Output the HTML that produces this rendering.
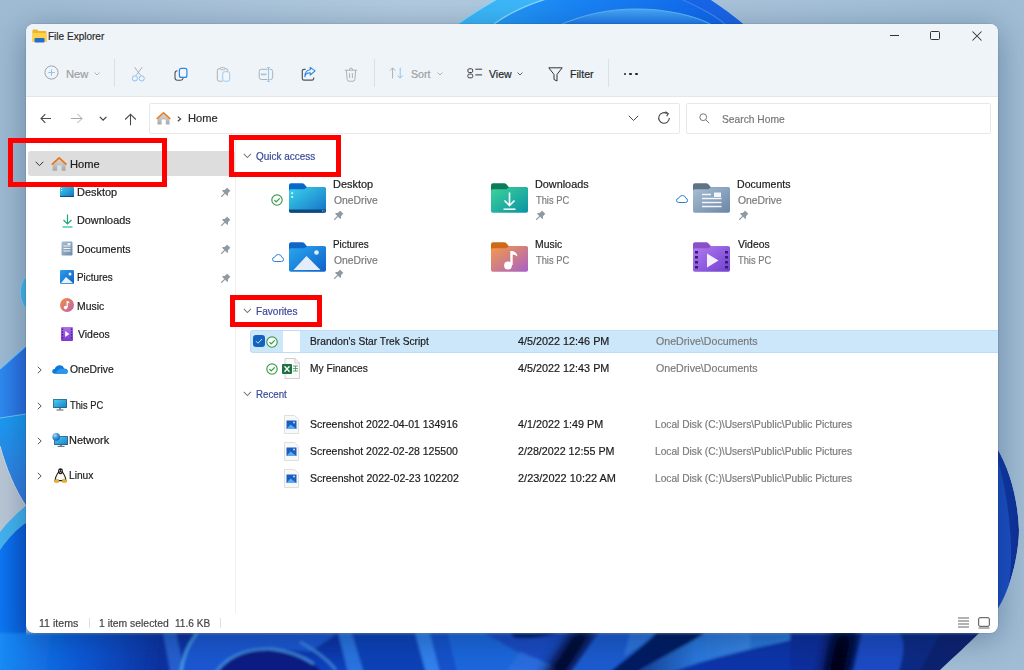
<!DOCTYPE html>
<html><head><meta charset="utf-8"><title>File Explorer</title>
<style>
html,body{margin:0;padding:0;width:1024px;height:670px;overflow:hidden;background:#a8bfd3}
body{position:relative;font-family:"Liberation Sans", sans-serif}
.t{position:absolute;white-space:nowrap;font-family:"Liberation Sans", sans-serif;transform-origin:0 0;-webkit-text-stroke:0.2px currentColor}
svg{overflow:visible}
</style></head><body>

<svg style="position:absolute;left:0;top:0" width="1024" height="670" viewBox="0 0 1024 670">
<defs>
<linearGradient id="bg" x1="0" y1="0" x2="1024" y2="0" gradientUnits="userSpaceOnUse">
<stop offset="0" stop-color="#9fbbd3"/><stop offset="0.4" stop-color="#b2cbdf"/><stop offset="1" stop-color="#a0bdd5"/>
</linearGradient>
<linearGradient id="dome" x1="458" y1="0" x2="742" y2="0" gradientUnits="userSpaceOnUse">
<stop offset="0" stop-color="#2aa4fa"/><stop offset="0.4" stop-color="#1a86f6"/><stop offset="1" stop-color="#0f62ea"/>
</linearGradient>
<linearGradient id="domec" x1="0" y1="9" x2="0" y2="24" gradientUnits="userSpaceOnUse"><stop offset="0" stop-color="#4aaaf8"/><stop offset="1" stop-color="#1f7cee"/></linearGradient>
<linearGradient id="b1" x1="0" y1="640" x2="160" y2="660" gradientUnits="userSpaceOnUse">
<stop offset="0" stop-color="#1a8cf6"/><stop offset="0.5" stop-color="#0c5ad8"/><stop offset="1" stop-color="#0a32a0"/>
</linearGradient>
<linearGradient id="b2" x1="0" y1="633" x2="0" y2="670" gradientUnits="userSpaceOnUse">
<stop offset="0" stop-color="#0b2d9a"/><stop offset="1" stop-color="#0e44c0"/>
</linearGradient>
<linearGradient id="shadowd" x1="550" y1="0" x2="640" y2="0" gradientUnits="userSpaceOnUse">
<stop offset="0" stop-color="#0a2a90" stop-opacity="0"/><stop offset="0.5" stop-color="#02051c"/><stop offset="1" stop-color="#0a2070" stop-opacity="0.2"/>
</linearGradient>
<linearGradient id="band" x1="600" y1="0" x2="760" y2="0" gradientUnits="userSpaceOnUse">
<stop offset="0" stop-color="#061a60"/><stop offset="0.6" stop-color="#2a78dc"/><stop offset="1" stop-color="#3a88e6"/>
</linearGradient>
<linearGradient id="sh2" x1="820" y1="0" x2="900" y2="0" gradientUnits="userSpaceOnUse">
<stop offset="0" stop-color="#0a2a90" stop-opacity="0"/><stop offset="0.55" stop-color="#020820"/><stop offset="1" stop-color="#0a2a90" stop-opacity="0"/>
</linearGradient>
<linearGradient id="rpet" x1="997" y1="0" x2="1020" y2="0" gradientUnits="userSpaceOnUse">
<stop offset="0" stop-color="#123ca8"/><stop offset="1" stop-color="#0e3096"/>
</linearGradient>
<linearGradient id="lblue" x1="0" y1="0" x2="26" y2="0" gradientUnits="userSpaceOnUse">
<stop offset="0" stop-color="#2e8cf2"/><stop offset="1" stop-color="#2a6ee0"/>
</linearGradient>
<linearGradient id="lmid" x1="0" y1="420" x2="0" y2="505" gradientUnits="userSpaceOnUse"><stop offset="0" stop-color="#1c9af2"/><stop offset="1" stop-color="#3a78dc"/></linearGradient>
<linearGradient id="lbot" x1="0" y1="0" x2="26" y2="0" gradientUnits="userSpaceOnUse">
<stop offset="0" stop-color="#0c78f4"/><stop offset="1" stop-color="#0a5cd8"/>
</linearGradient>
<filter id="soft" x="-5%" y="-50%" width="110%" height="200%"><feGaussianBlur stdDeviation="1.6"/></filter><filter id="soft5" x="-100%" y="-50%" width="300%" height="200%"><feGaussianBlur stdDeviation="6"/></filter>
</defs>
<rect width="1024" height="670" fill="url(#bg)"/>
<!-- top dome -->
<path d="M458 24 C 470 15, 485 6, 497 -1 L 709 -1 C 720 6, 732 15, 743 24 Z" fill="url(#dome)"/>
<path d="M458 24 C 470 15, 485 6, 497 -1 L 546 -1 C 524 6, 506 15, 494 24 Z" fill="#3cb8fa"/>
<path d="M458 24 C 470 15, 485 6, 497 -1" stroke="#8adcfc" stroke-width="1.2" fill="none"/>
<path d="M494 24 C 506 15, 524 6, 546 -1" stroke="#86d6fa" stroke-width="1.4" fill="none"/>
<path d="M681 -1 L709 -1 C 720 6, 732 15, 743 24 L726 25 C 715 15, 700 8, 681 -1 Z" fill="#1a66e8"/>
<path d="M560 25 C 585 14, 610 9, 636 9 C 665 9, 694 15, 712 25 Z" fill="url(#domec)"/>
<path d="M560 25 C 585 14, 610 9, 636 9 C 665 9, 694 15, 712 25" stroke="#60b6f8" stroke-width="1.2" fill="none"/>
<path d="M681 -1 C 700 8, 715 15, 726 25" stroke="#3c86f2" stroke-width="1.2" fill="none"/>
<!-- left strip -->
<path d="M26 277 C 19 283, 18 301, 26 308 Z" fill="#4cb8ee"/>
<path d="M26 277 C 19 283, 18 301, 26 308" stroke="#7fd6f6" stroke-width="1" fill="none"/>
<path d="M0 369 L26 346 L26 415 L0 418 Z" fill="url(#lblue)"/>
<path d="M0 369 L26 346" stroke="#70c8f6" stroke-width="1.2"/>
<path d="M0 418 L26 414 L26 510 L0 510 Z" fill="url(#lmid)"/>
<path d="M0 418 L26 414" stroke="#6cc4f4" stroke-width="1.2"/>
<path d="M0 446 C 6 468, 15 490, 26 506 L 0 532 Z" fill="#bac8d6"/>
<path d="M0 446 C 6 468, 15 490, 26 506" stroke="#d0dce6" stroke-width="1" fill="none"/>
<path d="M26 506 C 18 512, 8 522, 0 532 L0 550 C 8 538, 18 528, 26 523 Z" fill="#44b4f0"/>
<path d="M0 550 C 8 538, 18 528, 26 523 L26 670 L0 670 Z" fill="url(#lbot)"/>
<!-- bottom strip -->
<g filter="url(#soft)">
<rect x="-10" y="633" width="1044" height="47" fill="url(#b2)"/>
<path d="M-10 633 L163 633 L172 680 L-10 680 Z" fill="url(#b1)"/>
<path d="M163 633 L176 633 L186 680 L172 680 Z" fill="#2660d0"/>
<path d="M197 633 C 188 645, 182 657, 180 680 L 240 680 C 250 652, 275 647, 310 652 L 338 633 Z" fill="#1a58d2"/>
<path d="M197 633 C 188 645, 182 657, 180 680" stroke="#50b0f2" stroke-width="2" fill="none"/>
<path d="M212 680 C 222 656, 248 648, 272 649 C 290 651, 302 656, 314 664 L 330 680 Z" fill="#0a1c84"/>
<path d="M212 680 C 222 656, 248 648, 272 649 C 290 651, 302 656, 314 664" stroke="#4a9cf0" stroke-width="1.8" fill="none"/>
<path d="M300 642 C 315 650, 328 660, 336 670" stroke="#4a9cee" stroke-width="1.5" fill="none"/>
<path d="M338 633 L352 633 L366 680 L350 680 Z" fill="#2c74e2"/>
<path d="M352 633 L415 633 L428 680 L366 680 Z" fill="#0e42b8"/>
<path d="M415 633 L430 633 L442 680 L428 680 Z" fill="#3282ee"/>
<path d="M430 633 L447 633 L459 680 L442 680 Z" fill="#1852cc"/>
<path d="M447 633 L485 633 C 510 648, 535 660, 560 680 L 459 680 Z" fill="#1a68de"/>
<path d="M485 633 L 700 633 L 700 680 L560 680 C 535 660, 510 648, 485 633 Z" fill="#1a4cc4"/>
<path d="M510 633 L 560 633 C 545 637, 530 639, 515 638 Z" fill="#061a70"/>
<path d="M520 652 C 540 660, 555 665, 575 680 L 500 680 Z" fill="#2a6ee0"/>
<path d="M574 630 L596 630 L563 680 L541 680 Z" fill="#02041a" filter="url(#soft5)"/>
<path d="M599 633 L656 633 C 640 650, 620 662, 601 680 L 566 680 Z" fill="#1e5cd0"/>
<path d="M630 633 L656 633 C 645 643, 635 650, 624 656 Z" fill="#2e74dc"/>
<path d="M656 633 L 705 633 C 680 650, 650 662, 625 680 L 601 680 C 620 662, 640 650, 656 633 Z" fill="#061a62"/>
<path d="M705 633 L 790 633 L 790 640 C 740 652, 690 662, 655 680 L 625 680 C 650 662, 680 650, 705 633 Z" fill="url(#band)"/>
<path d="M560 680 L 655 680 C 690 662, 740 652, 790 640 L 790 680 Z" fill="#0b34aa"/>
<path d="M750 633 L 800 633 C 785 640, 765 645, 750 649 Z" fill="#2a78d8"/>
<path d="M790 633 L 860 633 L 850 680 L 790 680 Z" fill="#0b2e9c"/>
<path d="M832 630 L 858 630 L 848 680 L 822 680 Z" fill="#020618" filter="url(#soft5)"/>
<path d="M862 633 L 900 633 C 906 645, 904 660, 895 680 L 852 680 Z" fill="#1a4cc4"/>
<path d="M900 633 C 906 645, 904 660, 895 680 L 960 680 L 1010 633 Z" fill="#0b2a84"/><path d="M940 633 C 935 645, 925 660, 915 680 L 950 680 C 960 660, 975 645, 990 633 Z" fill="#0a2270"/>
</g>

<!-- right petal -->
<path d="M997 448 C 1010 470, 1018 500, 1019 530 C 1019 545, 1015 570, 1007 590 C 1001 606, 990 622, 979 633 L 997 633 Z" fill="url(#rpet)"/>
<path d="M997 458 C 1006 486, 1012 530, 1011 560 C 1010 590, 1004 612, 997 624 Z" fill="#1c4fc4"/>
<path d="M1040 430 L1040 690 L 925 690 L 940 670 C 955 656, 968 644, 979 633 C 990 622, 1001 606, 1007 590 C 1015 570, 1019 545, 1019 530 C 1018 500, 1010 470, 997 448 L 997 430 Z" fill="url(#bg)"/>
</svg><div id="win" style="position:absolute;left:26px;top:24px;width:971.5px;height:609px;border-radius:8px;overflow:hidden;background:#ffffff;box-shadow:0 0 0 1px rgba(0,0,0,0.06),0 6px 34px rgba(0,30,70,0.36)"></div><div style="position:absolute;left:26px;top:24px;width:971.5px;height:72px;border-radius:8px 8px 0 0;background:#eff4f9"></div><div style="position:absolute;left:26px;top:96px;width:971.5px;height:1px;background:#e3e6ea"></div><svg style="position:absolute;left:32px;top:29px;" width="15" height="14" viewBox="0 0 15 14"><path d="M0.5 1.5 Q0.5 0.5 1.5 0.5 L5 0.5 L6.5 2 L13.5 2 Q14.5 2 14.5 3 L14.5 13 L0.5 13 Z" fill="#f0b429"/><path d="M0.5 4 L14.5 4 L14.5 13 L0.5 13 Z" fill="#ffd04a"/><rect x="2.5" y="9" width="10" height="4.5" rx="1" fill="#1f6fd0"/></svg><div class="t" style="left:47.69px;top:30.69px;font-size:11px;line-height:11px;color:#2a2a2a;transform:scaleX(0.9115);">File Explorer</div><div style="position:absolute;left:890px;top:35px;width:9px;height:1px;background:#333"></div><div style="position:absolute;left:930px;top:31px;width:10px;height:9px;border:1px solid #333;border-radius:1.5px;box-sizing:border-box"></div><svg style="position:absolute;left:972px;top:31px;" width="10" height="10" viewBox="0 0 10 10"><path d="M0.5 0.5 L9.5 9.5 M9.5 0.5 L0.5 9.5" stroke="#333" stroke-width="1.05"/></svg><svg style="position:absolute;left:44px;top:65.3px;" width="15" height="15" viewBox="0 0 15 15"><circle cx="7.5" cy="7.5" r="6.6" fill="none" stroke="#a3a3a3" stroke-width="1"/><path d="M7.5 4.2 V10.8 M4.2 7.5 H10.8" stroke="#8ec4f0" stroke-width="1"/></svg><div class="t" style="left:65.58px;top:69.09px;font-size:11px;line-height:11px;color:#a0a0a0;transform:scaleX(1.0190);">New</div><svg style="position:absolute;left:93.5px;top:71.8px;" width="6" height="4" viewBox="0 0 6 4"><path d="M0.5 0.5 L3 3 L5.5 0.5" fill="none" stroke="#a8a8a8" stroke-width="0.9"/></svg><div style="position:absolute;left:114px;top:59px;width:1px;height:28px;background:#dcdfe3"></div><svg style="position:absolute;left:131px;top:65.8px;" width="15" height="16" viewBox="0 0 15 16"><path d="M3.6 1.2 L9.8 9.6 M11.2 1.2 L5 9.6" stroke="#a8a8a8" stroke-width="0.9" fill="none"/><circle cx="3.9" cy="12.4" r="2.6" fill="none" stroke="#8ec0f0" stroke-width="1"/><circle cx="10.7" cy="12.4" r="2.6" fill="none" stroke="#8ec0f0" stroke-width="1"/></svg><svg style="position:absolute;left:174px;top:66.8px;" width="15" height="15" viewBox="0 0 15 15"><path d="M3.5 3.8 Q1 3.8 1 6.3 L1 10.8 Q1 13.2 3.4 13.2 L6.8 13.2 Q8.8 13.2 9.2 11.2" fill="none" stroke="#505050" stroke-width="1.1"/><rect x="5.4" y="1.3" width="7.5" height="9.1" rx="2" fill="#f2f5f9" stroke="#2a86e4" stroke-width="1.2"/></svg><svg style="position:absolute;left:216px;top:66.8px;" width="15" height="15" viewBox="0 0 15 15"><path d="M4.2 1.6 L3.2 1.6 Q1.3 1.6 1.3 3.5 L1.3 12.3 Q1.3 14.2 3.2 14.2 L6.4 14.2 M8.8 1.6 L9.8 1.6 Q11.7 1.6 11.7 3.5 L11.7 4.4" fill="none" stroke="#b0b0b0" stroke-width="1"/><rect x="4.2" y="0.5" width="4.6" height="2.2" rx="1.1" fill="none" stroke="#b0b0b0" stroke-width="0.9"/><rect x="6.7" y="4.7" width="7" height="9.5" rx="2" fill="#f2f5f9" stroke="#9ccaf2" stroke-width="1"/></svg><svg style="position:absolute;left:258px;top:66.8px;" width="16" height="15" viewBox="0 0 16 15"><path d="M9.6 2.3 L3.4 2.3 Q1.2 2.3 1.2 4.5 L1.2 10.3 Q1.2 12.5 3.4 12.5 L9.6 12.5 M11.4 2.3 L12.5 2.3 Q14.7 2.3 14.7 4.5 L14.7 10.3 Q14.7 12.5 12.5 12.5 L11.4 12.5" fill="none" stroke="#b0b0b0" stroke-width="1"/><path d="M10.5 0.5 V14.3 M9.1 0.5 H11.9 M9.1 14.3 H11.9" stroke="#94c4f0" stroke-width="1" fill="none"/><rect x="2.8" y="6.6" width="5.6" height="1.6" fill="#94c4f0"/></svg><svg style="position:absolute;left:301px;top:66.8px;" width="15" height="15" viewBox="0 0 15 15"><path d="M4.6 2.3 L3 2.3 Q1.3 2.3 1.3 4 L1.3 11.4 Q1.3 13.1 3 13.1 L11 13.1 Q12.7 13.1 12.7 11.4 L12.7 10.4" fill="none" stroke="#555" stroke-width="1.2"/><path d="M3.9 9.6 Q4.2 5.9 9.2 5.7 L9.2 8 L14.1 3.9 L9.2 0.4 L9.2 2.7 Q3.9 3.3 3.9 9.6 Z" fill="#f2f5f9" stroke="#2a86e4" stroke-width="1.1" stroke-linejoin="round"/></svg><svg style="position:absolute;left:344px;top:66.8px;" width="14" height="15" viewBox="0 0 14 15"><path d="M0.8 3.2 H13.2 M5.4 3.2 Q5.4 1 7 1 Q8.6 1 8.6 3.2 M2.3 3.2 L3.2 12.6 Q3.4 14.2 5 14.2 L9 14.2 Q10.6 14.2 10.8 12.6 L11.7 3.2 M5.6 6.2 V11 M8.4 6.2 V11" fill="none" stroke="#b0b0b0" stroke-width="1"/></svg><div style="position:absolute;left:374px;top:59px;width:1px;height:28px;background:#dcdfe3"></div><svg style="position:absolute;left:389px;top:67.3px;" width="16" height="12" viewBox="0 0 16 12"><path d="M3.6 11.4 V0.9 M0.9 3.6 L3.6 0.9 L6.3 3.6" fill="none" stroke="#b0b0b0" stroke-width="1"/><path d="M11.2 0.6 V11.1 M8.5 8.4 L11.2 11.1 L13.9 8.4" fill="none" stroke="#8ec4f0" stroke-width="1"/></svg><div class="t" style="left:410.60px;top:69.09px;font-size:11px;line-height:11px;color:#a0a0a0;transform:scaleX(0.9700);">Sort</div><svg style="position:absolute;left:436.5px;top:71.8px;" width="6" height="4" viewBox="0 0 6 4"><path d="M0.5 0.5 L3 3 L5.5 0.5" fill="none" stroke="#a8a8a8" stroke-width="0.9"/></svg><svg style="position:absolute;left:467px;top:68.2px;" width="16" height="11.5" viewBox="0 0 16 11.5"><rect x="0.9" y="0.8" width="4.8" height="3.7" rx="1.3" fill="none" stroke="#3a3a3a" stroke-width="1"/><rect x="0.9" y="6.1" width="4.8" height="3.7" rx="1.3" fill="none" stroke="#3a3a3a" stroke-width="1"/><path d="M8.3 1.2 H15.1 M8.3 6.9 H15.1" stroke="#3a3a3a" stroke-width="1"/></svg><div class="t" style="left:488.80px;top:69.09px;font-size:11px;line-height:11px;color:#262626;transform:scaleX(0.9583);">View</div><svg style="position:absolute;left:516.5px;top:71.8px;" width="6" height="4" viewBox="0 0 6 4"><path d="M0.5 0.5 L3 3 L5.5 0.5" fill="none" stroke="#555" stroke-width="0.9"/></svg><svg style="position:absolute;left:548px;top:66.8px;" width="15" height="15" viewBox="0 0 15 15"><path d="M0.8 0.8 H14.2 L9 7.5 V14 L6 12.5 V7.5 Z" fill="none" stroke="#333" stroke-width="1" stroke-linejoin="round"/></svg><div class="t" style="left:569.63px;top:69.09px;font-size:11px;line-height:11px;color:#262626;transform:scaleX(0.9667);">Filter</div><div style="position:absolute;left:608px;top:59px;width:1px;height:28px;background:#dcdfe3"></div><div style="position:absolute;left:623.7px;top:72.5px;width:2.6px;height:2.6px;border-radius:50%;background:#222"></div><div style="position:absolute;left:629.4000000000001px;top:72.5px;width:2.6px;height:2.6px;border-radius:50%;background:#222"></div><div style="position:absolute;left:635.1px;top:72.5px;width:2.6px;height:2.6px;border-radius:50%;background:#222"></div><svg style="position:absolute;left:39.5px;top:113px;" width="12" height="11" viewBox="0 0 12 11"><path d="M11 5.5 H1 M5.3 1.2 L1 5.5 L5.3 9.8" fill="none" stroke="#4a4a4a" stroke-width="1.1"/></svg><svg style="position:absolute;left:70px;top:113px;" width="13" height="11" viewBox="0 0 13 11"><path d="M1 5.5 H12 M7.5 1 L12 5.5 L7.5 10" fill="none" stroke="#a8a8a8" stroke-width="1"/></svg><svg style="position:absolute;left:99px;top:115.8px;" width="9" height="6" viewBox="0 0 9 6"><path d="M0.8 0.9 L4.1 4.2 L7.4 0.9" fill="none" stroke="#444" stroke-width="1.3"/></svg><svg style="position:absolute;left:124px;top:112.5px;" width="13" height="13" viewBox="0 0 13 13"><path d="M6.5 12.3 V1.2 M1.2 6.5 L6.5 1.2 L11.8 6.5" fill="none" stroke="#4a4a4a" stroke-width="1.1"/></svg><div style="position:absolute;left:149px;top:103px;width:531px;height:31px;border:1px solid #e8e8e8;box-sizing:border-box;background:#fff;border-radius:2px"></div><svg style="position:absolute;left:156px;top:111.1px;" width="14.72" height="13.8" viewBox="0 0 16 15"><defs><linearGradient id="hg" x1="0" y1="0" x2="0" y2="1"><stop offset="0" stop-color="#dadada"/><stop offset="1" stop-color="#a8a8a8"/></linearGradient></defs><path d="M1.6 8.6 L8.15 2.6 L14.7 8.6 L14.7 14.7 L10.6 14.7 L10.6 9.3 L6.1 9.3 L6.1 14.7 L1.6 14.7 Z" fill="url(#hg)"/><path d="M1.3 8.2 L8.15 1.9 L15 8.2" fill="none" stroke="#ec7412" stroke-width="1.7" stroke-linejoin="round" stroke-linecap="round"/></svg><svg style="position:absolute;left:176.8px;top:116.3px;" width="5" height="6" viewBox="0 0 5 6"><path d="M0.8 0.6 L3.6 2.9 L0.8 5.2" fill="none" stroke="#444" stroke-width="1.2"/></svg><div class="t" style="left:187.79px;top:112.79px;font-size:11px;line-height:11px;color:#2b2b2b;transform:scaleX(1.0107);">Home</div><svg style="position:absolute;left:627.5px;top:115px;" width="11" height="7" viewBox="0 0 11 7"><path d="M0.8 0.8 L5.5 5.5 L10.2 0.8" fill="none" stroke="#444" stroke-width="1"/></svg><svg style="position:absolute;left:657px;top:111px;" width="14" height="14" viewBox="0 0 14 14"><path d="M12.3 7 A5.3 5.3 0 1 1 9.8 2.5" fill="none" stroke="#444" stroke-width="1.1"/><path d="M8.3 0.8 L11.3 2.6 L9.6 5.3" fill="none" stroke="#444" stroke-width="1.1"/></svg><div style="position:absolute;left:686px;top:103px;width:305px;height:31px;border:1px solid #e8e8e8;box-sizing:border-box;background:#fff;border-radius:2px"></div><svg style="position:absolute;left:699.2px;top:112.7px;" width="11" height="11" viewBox="0 0 11 11"><circle cx="4.2" cy="4.2" r="3.4" fill="none" stroke="#777" stroke-width="1"/><path d="M6.7 6.7 L10.2 10.2" stroke="#777" stroke-width="1"/></svg><div class="t" style="left:722.30px;top:113.79px;font-size:11px;line-height:11px;color:#777777;transform:scaleX(0.9328);">Search Home</div><div style="position:absolute;left:235px;top:141px;width:1px;height:472px;background:#efefef"></div><div style="position:absolute;left:28px;top:151px;width:207px;height:25px;background:#dddddd;border-radius:3px"></div><svg style="position:absolute;left:35px;top:161px;" width="9" height="6" viewBox="0 0 9 6"><path d="M0.7 0.8 L4.5 4.6 L8.3 0.8" fill="none" stroke="#333" stroke-width="1"/></svg><svg style="position:absolute;left:51.1px;top:156px;" width="16.0" height="15.0" viewBox="0 0 16 15"><defs><linearGradient id="hg" x1="0" y1="0" x2="0" y2="1"><stop offset="0" stop-color="#dadada"/><stop offset="1" stop-color="#a8a8a8"/></linearGradient></defs><path d="M1.6 8.6 L8.15 2.6 L14.7 8.6 L14.7 14.7 L10.6 14.7 L10.6 9.3 L6.1 9.3 L6.1 14.7 L1.6 14.7 Z" fill="url(#hg)"/><path d="M1.3 8.2 L8.15 1.9 L15 8.2" fill="none" stroke="#ec7412" stroke-width="1.7" stroke-linejoin="round" stroke-linecap="round"/></svg><div class="t" style="left:69.79px;top:158.99px;font-size:11px;line-height:11px;color:#1b1b1b;transform:scaleX(1.0107);">Home</div><svg style="position:absolute;left:60px;top:186.8px;" width="14" height="10" viewBox="0 0 14 10"><defs><linearGradient id="dk60186" x1="0" y1="0" x2="1" y2="1"><stop offset="0" stop-color="#36cce8"/><stop offset="1" stop-color="#1474c4"/></linearGradient></defs><rect x="0" y="0" width="14" height="10" rx="1" fill="url(#dk60186)"/><rect x="0" y="8.9" width="14" height="1.1" fill="#0d4f8a"/><rect x="1.2" y="1" width="1" height="1" fill="#e8f8ff"/><rect x="1.2" y="3" width="1" height="1" fill="#e8f8ff"/></svg><svg style="position:absolute;left:61.5px;top:214px;" width="11" height="14" viewBox="0 0 11 14"><path d="M5.5 0.5 V10 M1.5 6 L5.5 10 L9.5 6" fill="none" stroke="#1fa67a" stroke-width="1.2"/><path d="M0.5 13 H10.5" stroke="#3cc8a8" stroke-width="1.4"/></svg><svg style="position:absolute;left:60.8px;top:241px;" width="12" height="15" viewBox="0 0 12 15"><defs><linearGradient id="docg" x1="0" y1="0" x2="1" y2="1"><stop offset="0" stop-color="#a9bfd6"/><stop offset="1" stop-color="#6f8aa8"/></linearGradient></defs><rect x="0.5" y="0.5" width="11" height="14" rx="1.2" fill="url(#docg)"/><path d="M2.5 5 H9.5 M2.5 7.5 H9.5 M2.5 10 H9.5" stroke="#eef3f8" stroke-width="1"/><rect x="6.5" y="2" width="3" height="2" fill="#eef3f8"/></svg><svg style="position:absolute;left:60px;top:270.2px;" width="14" height="14" viewBox="0 0 14 14"><defs><linearGradient id="picg" x1="0" y1="0" x2="1" y2="1"><stop offset="0" stop-color="#2aa0f0"/><stop offset="1" stop-color="#0f5fc0"/></linearGradient></defs><rect x="0" y="0" width="14" height="14" rx="1.2" fill="url(#picg)"/><path d="M0.8 13.2 L6 7 L13.2 13.2 Z" fill="#e8f2fc"/><circle cx="10" cy="4" r="1.5" fill="#e8f2fc"/></svg><svg style="position:absolute;left:59.7px;top:298.4px;" width="14" height="14" viewBox="0 0 14 14"><defs><linearGradient id="musg" x1="0" y1="0" x2="1" y2="1"><stop offset="0" stop-color="#f09040"/><stop offset="1" stop-color="#c060b0"/></linearGradient></defs><circle cx="7" cy="7" r="7" fill="url(#musg)"/><path d="M7.2 3 V9.3" stroke="#fff" stroke-width="1.3"/><circle cx="5.6" cy="9.6" r="1.8" fill="#fff"/><path d="M7.2 3 Q9.5 3.3 9.8 5.5 Q8.5 4.6 7.2 4.8 Z" fill="#fff"/></svg><svg style="position:absolute;left:60.8px;top:327px;" width="12" height="14" viewBox="0 0 12 14"><defs><linearGradient id="vidg" x1="0" y1="0" x2="0" y2="1"><stop offset="0" stop-color="#b070e8"/><stop offset="1" stop-color="#7a3ad0"/></linearGradient></defs><rect x="0" y="0" width="12" height="14" rx="1" fill="url(#vidg)"/><path d="M1.5 1.5 V12.5 M10.5 1.5 V12.5" stroke="#4a2090" stroke-width="1.4" stroke-dasharray="1.4 1.4"/><path d="M4.2 4 L8.3 7 L4.2 10 Z" fill="#fff"/></svg><div class="t" style="left:76.61px;top:187.09px;font-size:11px;line-height:11px;color:#1b1b1b;transform:scaleX(0.9949);">Desktop</div><div class="t" style="left:76.62px;top:215.49px;font-size:11px;line-height:11px;color:#1b1b1b;transform:scaleX(0.9849);">Downloads</div><div class="t" style="left:76.64px;top:243.99px;font-size:11px;line-height:11px;color:#1b1b1b;transform:scaleX(0.9618);">Documents</div><div class="t" style="left:76.70px;top:272.29px;font-size:11px;line-height:11px;color:#1b1b1b;transform:scaleX(0.8974);">Pictures</div><div class="t" style="left:76.65px;top:300.79px;font-size:11px;line-height:11px;color:#1b1b1b;transform:scaleX(0.9464);">Music</div><div class="t" style="left:77.60px;top:328.89px;font-size:11px;line-height:11px;color:#1b1b1b;transform:scaleX(0.9485);">Videos</div><svg style="position:absolute;left:221px;top:187.4px;" width="10" height="10" viewBox="0 0 10 10"><path d="M5.9 0.5 L9.5 4.1 L8.4 4.6 L6.9 6.5 L7.1 8.1 L6.3 8.9 L1.1 3.7 L1.9 2.9 L3.5 3.1 L5.4 1.6 Z" fill="#8e99a2"/><path d="M3.4 6.6 L0.6 9.4" stroke="#8e99a2" stroke-width="1.3" stroke-linecap="round"/></svg><svg style="position:absolute;left:221px;top:215.8px;" width="10" height="10" viewBox="0 0 10 10"><path d="M5.9 0.5 L9.5 4.1 L8.4 4.6 L6.9 6.5 L7.1 8.1 L6.3 8.9 L1.1 3.7 L1.9 2.9 L3.5 3.1 L5.4 1.6 Z" fill="#8e99a2"/><path d="M3.4 6.6 L0.6 9.4" stroke="#8e99a2" stroke-width="1.3" stroke-linecap="round"/></svg><svg style="position:absolute;left:221px;top:244.3px;" width="10" height="10" viewBox="0 0 10 10"><path d="M5.9 0.5 L9.5 4.1 L8.4 4.6 L6.9 6.5 L7.1 8.1 L6.3 8.9 L1.1 3.7 L1.9 2.9 L3.5 3.1 L5.4 1.6 Z" fill="#8e99a2"/><path d="M3.4 6.6 L0.6 9.4" stroke="#8e99a2" stroke-width="1.3" stroke-linecap="round"/></svg><svg style="position:absolute;left:221px;top:272.6px;" width="10" height="10" viewBox="0 0 10 10"><path d="M5.9 0.5 L9.5 4.1 L8.4 4.6 L6.9 6.5 L7.1 8.1 L6.3 8.9 L1.1 3.7 L1.9 2.9 L3.5 3.1 L5.4 1.6 Z" fill="#8e99a2"/><path d="M3.4 6.6 L0.6 9.4" stroke="#8e99a2" stroke-width="1.3" stroke-linecap="round"/></svg><svg style="position:absolute;left:36.5px;top:366.40000000000003px;" width="6" height="8" viewBox="0 0 6 8"><path d="M0.8 0.8 L4.2 4 L0.8 7.2" fill="none" stroke="#555" stroke-width="1"/></svg><div class="t" style="left:69.90px;top:364.29px;font-size:11px;line-height:11px;color:#1b1b1b;transform:scaleX(0.9413);">OneDrive</div><svg style="position:absolute;left:36.5px;top:401.8px;" width="6" height="8" viewBox="0 0 6 8"><path d="M0.8 0.8 L4.2 4 L0.8 7.2" fill="none" stroke="#555" stroke-width="1"/></svg><div class="t" style="left:70.30px;top:399.69px;font-size:11px;line-height:11px;color:#1b1b1b;transform:scaleX(0.8462);">This PC</div><svg style="position:absolute;left:36.5px;top:437.2px;" width="6" height="8" viewBox="0 0 6 8"><path d="M0.8 0.8 L4.2 4 L0.8 7.2" fill="none" stroke="#555" stroke-width="1"/></svg><div class="t" style="left:69.30px;top:435.09px;font-size:11px;line-height:11px;color:#1b1b1b;transform:scaleX(0.9974);">Network</div><svg style="position:absolute;left:36.5px;top:472.3px;" width="6" height="8" viewBox="0 0 6 8"><path d="M0.8 0.8 L4.2 4 L0.8 7.2" fill="none" stroke="#555" stroke-width="1"/></svg><div class="t" style="left:69.37px;top:470.19px;font-size:11px;line-height:11px;color:#1b1b1b;transform:scaleX(0.9280);">Linux</div><svg style="position:absolute;left:52px;top:365px;" width="16" height="9" viewBox="0 0 16 9"><path d="M3 8.8 Q0.2 8.8 0.2 6.3 Q0.2 4 2.8 3.8 Q4 0.3 7.8 0.3 Q11 0.3 12 3.4 Q15.8 3.6 15.8 6.3 Q15.8 8.8 13 8.8 Z" fill="#0f78d8"/><path d="M5 8.8 Q3.5 6 6.5 4.8 Q8.5 2.8 11.5 4 Q15.8 3.8 15.8 6.5 Q15.8 8.8 13 8.8 Z" fill="#2a96ee"/></svg><svg style="position:absolute;left:52.5px;top:399px;" width="14" height="12" viewBox="0 0 14 12"><defs><linearGradient id="pcg" x1="0" y1="0" x2="1" y2="1"><stop offset="0" stop-color="#48d0f0"/><stop offset="1" stop-color="#1a80c8"/></linearGradient></defs><rect x="0" y="0" width="14" height="9" rx="0.8" fill="#2a4a6a"/><rect x="0.6" y="0.6" width="12.8" height="7.8" fill="url(#pcg)"/><rect x="6" y="9" width="2" height="1.5" fill="#7a8a9a"/><rect x="3.5" y="10.4" width="7" height="1.2" fill="#6a7a8a"/></svg><svg style="position:absolute;left:52px;top:433px;" width="16" height="14" viewBox="0 0 16 14"><defs><linearGradient id="ntg" x1="0" y1="0" x2="1" y2="1"><stop offset="0" stop-color="#48d0f0"/><stop offset="1" stop-color="#1a80c8"/></linearGradient></defs><rect x="2" y="3" width="14" height="9" rx="0.8" fill="#2a4a6a"/><rect x="2.6" y="3.6" width="12.8" height="7.8" fill="url(#ntg)"/><rect x="8" y="12" width="2" height="1" fill="#7a8a9a"/><rect x="5.5" y="12.8" width="7" height="1.2" fill="#6a7a8a"/><radialGradient id="glg" cx="0.35" cy="0.3" r="0.8"><stop offset="0" stop-color="#a8dcfa"/><stop offset="0.5" stop-color="#3a8ed8"/><stop offset="1" stop-color="#1a5aa8"/></radialGradient><circle cx="4.2" cy="3.9" r="3.8" fill="url(#glg)"/></svg><svg style="position:absolute;left:53.5px;top:468px;" width="13" height="15" viewBox="0 0 13 15"><path d="M4.4 4.2 C 2.6 6.8, 1 9.8, 1.3 12.6 L 11.7 12.6 C 12 9.8, 10.4 6.8, 8.6 4.2 Z" fill="#fafafa" stroke="#1a1a1a" stroke-width="1.1"/><ellipse cx="6.5" cy="3.2" rx="2.4" ry="3" fill="#1a1a1a"/><circle cx="5.6" cy="2.8" r="0.6" fill="#fff"/><circle cx="7.4" cy="2.8" r="0.6" fill="#fff"/><path d="M5.3 4.1 L7.7 4.1 L6.5 5.3 Z" fill="#f0b020"/><ellipse cx="2.7" cy="12.9" rx="2.5" ry="1.7" fill="#f0b020" stroke="#b07a10" stroke-width="0.4"/><ellipse cx="10.3" cy="12.9" rx="2.5" ry="1.7" fill="#f0b020" stroke="#b07a10" stroke-width="0.4"/></svg><svg style="position:absolute;left:243px;top:153.3px;" width="9" height="6" viewBox="0 0 9 6"><path d="M0.8 0.9 L4.4 4.5 L8 0.9" fill="none" stroke="#7a7a7a" stroke-width="1.05"/></svg><div class="t" style="left:256.20px;top:150.79px;font-size:11px;line-height:11px;color:#3a4a9a;transform:scaleX(0.9062);">Quick access</div><svg style="position:absolute;left:288.5px;top:183px;" width="38" height="30" viewBox="0 0 38 30"><defs><linearGradient id="bfdesktop" x1="0" y1="0" x2="1" y2="1"><stop offset="0" stop-color="#3ad4ea"/><stop offset="1" stop-color="#1670c8"/></linearGradient></defs><path d="M0 2.2 Q0 0.2 2 0.2 L13 0.2 Q14.6 0.2 15.6 1.4 L18 4.3 L35 4.3 Q37 4.3 37 6.3 L37 12 L0 12 Z" fill="#0a68cc"/><path d="M0 8 Q0 6.3 1.8 6.3 L15.5 6.3 L18 4.3 L35 4.3 Q37 4.3 37 6.3 L37 28 Q37 29.8 35.2 29.8 L1.8 29.8 Q0 29.8 0 28 Z" fill="url(#bfdesktop)"/><path d="M0 26.6 H37 V28 Q37 29.8 35.2 29.8 L1.8 29.8 Q0 29.8 0 28 Z" fill="#0c4a7c"/><rect x="2.3" y="9.3" width="1.8" height="1.8" fill="#eaf8ff"/><rect x="2.3" y="13" width="1.8" height="1.8" fill="#eaf8ff"/><rect x="33" y="27.3" width="0.8" height="1.3" fill="#8ab8d8"/><rect x="34.6" y="27.3" width="0.8" height="1.3" fill="#8ab8d8"/></svg><div class="t" style="left:332.81px;top:179.49px;font-size:11px;line-height:11px;color:#1b1b1b;transform:scaleX(0.9949);">Desktop</div><div class="t" style="left:333.80px;top:195.39px;font-size:11px;line-height:11px;color:#7a7a7a;transform:scaleX(0.9413);">OneDrive</div><svg style="position:absolute;left:334.1px;top:209.8px;" width="10" height="10" viewBox="0 0 10 10"><path d="M5.9 0.5 L9.5 4.1 L8.4 4.6 L6.9 6.5 L7.1 8.1 L6.3 8.9 L1.1 3.7 L1.9 2.9 L3.5 3.1 L5.4 1.6 Z" fill="#8e99a2"/><path d="M3.4 6.6 L0.6 9.4" stroke="#8e99a2" stroke-width="1.3" stroke-linecap="round"/></svg><svg style="position:absolute;left:271.2px;top:194.3px;" width="12" height="12" viewBox="0 0 12 12"><circle cx="6" cy="6" r="5.2" fill="#fff" stroke="#3a9a4a" stroke-width="1.15"/><path d="M3.4 6.1 L5.2 7.9 L8.7 4.4" fill="none" stroke="#3a9a4a" stroke-width="1.3"/></svg><svg style="position:absolute;left:490.7px;top:183px;" width="38" height="30" viewBox="0 0 38 30"><defs><linearGradient id="bfdownload" x1="0" y1="0" x2="1" y2="1"><stop offset="0" stop-color="#3cd49a"/><stop offset="1" stop-color="#0c92a4"/></linearGradient></defs><path d="M0 2.2 Q0 0.2 2 0.2 L13 0.2 Q14.6 0.2 15.6 1.4 L18 4.3 L35 4.3 Q37 4.3 37 6.3 L37 12 L0 12 Z" fill="#0f7a5a"/><path d="M0 8 Q0 6.3 1.8 6.3 L15.5 6.3 L18 4.3 L35 4.3 Q37 4.3 37 6.3 L37 28 Q37 29.8 35.2 29.8 L1.8 29.8 Q0 29.8 0 28 Z" fill="url(#bfdownload)"/><path d="M18.5 9.5 V22.5 M13.5 17.5 L18.5 22.5 L23.5 17.5" stroke="#fff" stroke-width="1.6" fill="none"/><path d="M12.5 26.2 H24.5" stroke="#fff" stroke-width="1.5"/></svg><div class="t" style="left:535.02px;top:179.49px;font-size:11px;line-height:11px;color:#1b1b1b;transform:scaleX(0.9849);">Downloads</div><div class="t" style="left:536.00px;top:195.39px;font-size:11px;line-height:11px;color:#7a7a7a;transform:scaleX(0.8462);">This PC</div><svg style="position:absolute;left:536.3px;top:209.8px;" width="10" height="10" viewBox="0 0 10 10"><path d="M5.9 0.5 L9.5 4.1 L8.4 4.6 L6.9 6.5 L7.1 8.1 L6.3 8.9 L1.1 3.7 L1.9 2.9 L3.5 3.1 L5.4 1.6 Z" fill="#8e99a2"/><path d="M3.4 6.6 L0.6 9.4" stroke="#8e99a2" stroke-width="1.3" stroke-linecap="round"/></svg><svg style="position:absolute;left:692.7px;top:183px;" width="38" height="30" viewBox="0 0 38 30"><defs><linearGradient id="bfdocuments" x1="0" y1="0" x2="1" y2="1"><stop offset="0" stop-color="#a9bed4"/><stop offset="1" stop-color="#6a86a6"/></linearGradient></defs><path d="M0 2.2 Q0 0.2 2 0.2 L13 0.2 Q14.6 0.2 15.6 1.4 L18 4.3 L35 4.3 Q37 4.3 37 6.3 L37 12 L0 12 Z" fill="#5d7388"/><path d="M0 8 Q0 6.3 1.8 6.3 L15.5 6.3 L18 4.3 L35 4.3 Q37 4.3 37 6.3 L37 28 Q37 29.8 35.2 29.8 L1.8 29.8 Q0 29.8 0 28 Z" fill="url(#bfdocuments)"/><path d="M9 11.5 H18 M9 15.5 H28.5 M9 19.5 H28.5 M9 23.5 H28.5" stroke="#f2f6fa" stroke-width="1.6"/><rect x="21" y="9.5" width="7" height="4.5" fill="#f2f6fa"/></svg><div class="t" style="left:737.24px;top:179.49px;font-size:11px;line-height:11px;color:#1b1b1b;transform:scaleX(0.9618);">Documents</div><div class="t" style="left:738.20px;top:195.39px;font-size:11px;line-height:11px;color:#7a7a7a;transform:scaleX(0.9413);">OneDrive</div><svg style="position:absolute;left:738.5px;top:209.8px;" width="10" height="10" viewBox="0 0 10 10"><path d="M5.9 0.5 L9.5 4.1 L8.4 4.6 L6.9 6.5 L7.1 8.1 L6.3 8.9 L1.1 3.7 L1.9 2.9 L3.5 3.1 L5.4 1.6 Z" fill="#8e99a2"/><path d="M3.4 6.6 L0.6 9.4" stroke="#8e99a2" stroke-width="1.3" stroke-linecap="round"/></svg><svg style="position:absolute;left:675.7px;top:195px;" width="12" height="8" viewBox="0 0 12 8"><path d="M2.8 7.5 Q0.5 7.5 0.5 5.3 Q0.5 3.4 2.6 3.3 Q3.6 0.5 6.5 0.5 Q9.2 0.5 9.9 3.3 Q11.5 3.5 11.5 5.5 Q11.5 7.5 9.5 7.5 Z" fill="none" stroke="#2a7fd4" stroke-width="1"/></svg><svg style="position:absolute;left:288.5px;top:242px;" width="38" height="30" viewBox="0 0 38 30"><defs><linearGradient id="bfpictures" x1="0" y1="0" x2="1" y2="1"><stop offset="0" stop-color="#28a8f0"/><stop offset="1" stop-color="#1060c8"/></linearGradient></defs><path d="M0 2.2 Q0 0.2 2 0.2 L13 0.2 Q14.6 0.2 15.6 1.4 L18 4.3 L35 4.3 Q37 4.3 37 6.3 L37 12 L0 12 Z" fill="#0f66c8"/><path d="M0 8 Q0 6.3 1.8 6.3 L15.5 6.3 L18 4.3 L35 4.3 Q37 4.3 37 6.3 L37 28 Q37 29.8 35.2 29.8 L1.8 29.8 Q0 29.8 0 28 Z" fill="url(#bfpictures)"/><path d="M4.5 28 L17.5 14 L31.5 28 Z" fill="#e4eefb"/><circle cx="27.5" cy="10.5" r="2.3" fill="#e4eefb"/></svg><div class="t" style="left:332.90px;top:238.79px;font-size:11px;line-height:11px;color:#1b1b1b;transform:scaleX(0.8974);">Pictures</div><div class="t" style="left:333.80px;top:254.69px;font-size:11px;line-height:11px;color:#7a7a7a;transform:scaleX(0.9413);">OneDrive</div><svg style="position:absolute;left:334.1px;top:269.1px;" width="10" height="10" viewBox="0 0 10 10"><path d="M5.9 0.5 L9.5 4.1 L8.4 4.6 L6.9 6.5 L7.1 8.1 L6.3 8.9 L1.1 3.7 L1.9 2.9 L3.5 3.1 L5.4 1.6 Z" fill="#8e99a2"/><path d="M3.4 6.6 L0.6 9.4" stroke="#8e99a2" stroke-width="1.3" stroke-linecap="round"/></svg><svg style="position:absolute;left:271.5px;top:254px;" width="12" height="8" viewBox="0 0 12 8"><path d="M2.8 7.5 Q0.5 7.5 0.5 5.3 Q0.5 3.4 2.6 3.3 Q3.6 0.5 6.5 0.5 Q9.2 0.5 9.9 3.3 Q11.5 3.5 11.5 5.5 Q11.5 7.5 9.5 7.5 Z" fill="none" stroke="#2a7fd4" stroke-width="1"/></svg><svg style="position:absolute;left:490.7px;top:242px;" width="38" height="30" viewBox="0 0 38 30"><defs><linearGradient id="bfmusic" x1="0" y1="0" x2="1" y2="1"><stop offset="0" stop-color="#f59a48"/><stop offset="1" stop-color="#a860c8"/></linearGradient></defs><path d="M0 2.2 Q0 0.2 2 0.2 L13 0.2 Q14.6 0.2 15.6 1.4 L18 4.3 L35 4.3 Q37 4.3 37 6.3 L37 12 L0 12 Z" fill="#d06818"/><path d="M0 8 Q0 6.3 1.8 6.3 L15.5 6.3 L18 4.3 L35 4.3 Q37 4.3 37 6.3 L37 28 Q37 29.8 35.2 29.8 L1.8 29.8 Q0 29.8 0 28 Z" fill="url(#bfmusic)"/><path d="M20.5 9 V23" stroke="#fff" stroke-width="2.4"/><circle cx="17" cy="23.5" r="3.9" fill="#fff"/><path d="M20.5 9 Q26 9.5 26.5 14.5 Q23.5 12 20.5 12.5 Z" fill="#fff"/></svg><div class="t" style="left:535.05px;top:238.79px;font-size:11px;line-height:11px;color:#1b1b1b;transform:scaleX(0.9464);">Music</div><div class="t" style="left:536.00px;top:254.69px;font-size:11px;line-height:11px;color:#7a7a7a;transform:scaleX(0.8462);">This PC</div><svg style="position:absolute;left:692.7px;top:242px;" width="38" height="30" viewBox="0 0 38 30"><defs><linearGradient id="bfvideos" x1="0" y1="0" x2="1" y2="1"><stop offset="0" stop-color="#b27cf0"/><stop offset="1" stop-color="#7040d0"/></linearGradient></defs><path d="M0 2.2 Q0 0.2 2 0.2 L13 0.2 Q14.6 0.2 15.6 1.4 L18 4.3 L35 4.3 Q37 4.3 37 6.3 L37 12 L0 12 Z" fill="#8a50c8"/><path d="M0 8 Q0 6.3 1.8 6.3 L15.5 6.3 L18 4.3 L35 4.3 Q37 4.3 37 6.3 L37 28 Q37 29.8 35.2 29.8 L1.8 29.8 Q0 29.8 0 28 Z" fill="url(#bfvideos)"/><path d="M3.5 9 V28 M33.5 9 V28" stroke="#3a1a70" stroke-width="3" stroke-dasharray="2.4 2.6"/><path d="M14 11.5 L25.5 18.5 L14 25.5 Z" fill="#f4eefc"/></svg><div class="t" style="left:738.20px;top:238.79px;font-size:11px;line-height:11px;color:#1b1b1b;transform:scaleX(0.9485);">Videos</div><div class="t" style="left:738.20px;top:254.69px;font-size:11px;line-height:11px;color:#7a7a7a;transform:scaleX(0.8462);">This PC</div><svg style="position:absolute;left:243px;top:308px;" width="9" height="6" viewBox="0 0 9 6"><path d="M0.8 0.9 L4.4 4.5 L8 0.9" fill="none" stroke="#7a7a7a" stroke-width="1.05"/></svg><div class="t" style="left:255.78px;top:306.09px;font-size:11px;line-height:11px;color:#3a4a9a;transform:scaleX(0.9182);">Favorites</div><div style="position:absolute;left:249.5px;top:329.5px;width:748px;height:23.5px;background:#cce6fa;border-radius:4px 0 0 4px;box-shadow:inset 0 1px 0 #bddcf7,inset 0 -1px 0 #bddcf7,inset 1px 0 0 #bddcf7"></div><div style="position:absolute;left:253px;top:335px;width:12px;height:12px;background:#1462c0;border-radius:3px"></div><svg style="position:absolute;left:253px;top:335px;" width="12" height="12" viewBox="0 0 12 12"><path d="M3 6.2 L5 8.2 L9 4" fill="none" stroke="#cfe2f8" stroke-width="1"/></svg><svg style="position:absolute;left:266.3px;top:335.5px;" width="12" height="12" viewBox="0 0 12 12"><circle cx="6" cy="6" r="5.2" fill="#fff" stroke="#3a9a4a" stroke-width="1.15"/><path d="M3.4 6.1 L5.2 7.9 L8.7 4.4" fill="none" stroke="#3a9a4a" stroke-width="1.3"/></svg><div style="position:absolute;left:283px;top:331px;width:17px;height:21px;background:#ffffff"></div><div class="t" style="left:309.67px;top:335.89px;font-size:11px;line-height:11px;color:#1b1b1b;transform:scaleX(0.9276);">Brandon's Star Trek Script</div><div class="t" style="left:518.00px;top:335.79px;font-size:11px;line-height:11px;color:#1b1b1b;transform:scaleX(0.9826);">4/5/2022 12:46 PM</div><div class="t" style="left:656.30px;top:335.79px;font-size:11px;line-height:11px;color:#7a7a7a;transform:scaleX(0.9657);">OneDrive\Documents</div><svg style="position:absolute;left:266.3px;top:363px;" width="12" height="12" viewBox="0 0 12 12"><circle cx="6" cy="6" r="5.2" fill="#fff" stroke="#3a9a4a" stroke-width="1.15"/><path d="M3.4 6.1 L5.2 7.9 L8.7 4.4" fill="none" stroke="#3a9a4a" stroke-width="1.3"/></svg><svg style="position:absolute;left:281px;top:358px;" width="19" height="21" viewBox="0 0 19 21"><path d="M4 0.5 L14 0.5 L18.5 5 L18.5 20.5 L4 20.5 Z" fill="#fafafa" stroke="#c4c4c4" stroke-width="0.8"/><path d="M14 0.5 V5 H18.5" fill="none" stroke="#c4c4c4" stroke-width="0.8"/><rect x="1" y="6" width="10" height="10" rx="1" fill="#1e7145"/><path d="M3.5 8.2 L8.5 13.8 M8.5 8.2 L3.5 13.8" stroke="#fff" stroke-width="1.3"/><path d="M12 8 H17 M12 10.5 H17 M12 13 H17 M14.5 8 V13" stroke="#3a9a5a" stroke-width="0.8"/></svg><div class="t" style="left:309.67px;top:362.89px;font-size:11px;line-height:11px;color:#1b1b1b;transform:scaleX(0.9279);">My Finances</div><div class="t" style="left:518.00px;top:362.89px;font-size:11px;line-height:11px;color:#1b1b1b;transform:scaleX(0.9826);">4/5/2022 12:43 PM</div><div class="t" style="left:656.30px;top:362.89px;font-size:11px;line-height:11px;color:#7a7a7a;transform:scaleX(0.9657);">OneDrive\Documents</div><svg style="position:absolute;left:243px;top:391px;" width="9" height="6" viewBox="0 0 9 6"><path d="M0.8 0.9 L4.4 4.5 L8 0.9" fill="none" stroke="#7a7a7a" stroke-width="1.05"/></svg><div class="t" style="left:255.62px;top:389.09px;font-size:11px;line-height:11px;color:#3a4a9a;transform:scaleX(0.8824);">Recent</div><svg style="position:absolute;left:284px;top:414.59999999999997px;" width="15" height="19" viewBox="0 0 15 19"><path d="M0.5 0.5 L10.5 0.5 L14.5 4.5 L14.5 18.5 L0.5 18.5 Z" fill="#f8f8f8" stroke="#d8d8d8" stroke-width="0.8"/><rect x="2.5" y="5.5" width="10" height="8.5" fill="#1a5fc0"/><path d="M2.5 14 L6.5 9.5 L12.5 14 Z" fill="#5aaaf0"/><circle cx="10" cy="7.5" r="1" fill="#bfe0fb"/></svg><div class="t" style="left:310.40px;top:418.59px;font-size:11px;line-height:11px;color:#1b1b1b;transform:scaleX(0.9555);">Screenshot 2022-04-01 134916</div><div class="t" style="left:518.00px;top:418.59px;font-size:11px;line-height:11px;color:#1b1b1b;transform:scaleX(0.9802);">4/1/2022 1:49 PM</div><div class="t" style="left:655.37px;top:418.59px;font-size:11px;line-height:11px;color:#7a7a7a;transform:scaleX(0.9264);">Local Disk (C:)\Users\Public\Public Pictures</div><svg style="position:absolute;left:284px;top:441.8px;" width="15" height="19" viewBox="0 0 15 19"><path d="M0.5 0.5 L10.5 0.5 L14.5 4.5 L14.5 18.5 L0.5 18.5 Z" fill="#f8f8f8" stroke="#d8d8d8" stroke-width="0.8"/><rect x="2.5" y="5.5" width="10" height="8.5" fill="#1a5fc0"/><path d="M2.5 14 L6.5 9.5 L12.5 14 Z" fill="#5aaaf0"/><circle cx="10" cy="7.5" r="1" fill="#bfe0fb"/></svg><div class="t" style="left:310.40px;top:445.79px;font-size:11px;line-height:11px;color:#1b1b1b;transform:scaleX(0.9555);">Screenshot 2022-02-28 125500</div><div class="t" style="left:518.00px;top:445.79px;font-size:11px;line-height:11px;color:#1b1b1b;transform:scaleX(0.9737);">2/28/2022 12:55 PM</div><div class="t" style="left:655.37px;top:445.79px;font-size:11px;line-height:11px;color:#7a7a7a;transform:scaleX(0.9264);">Local Disk (C:)\Users\Public\Public Pictures</div><svg style="position:absolute;left:284px;top:469.0px;" width="15" height="19" viewBox="0 0 15 19"><path d="M0.5 0.5 L10.5 0.5 L14.5 4.5 L14.5 18.5 L0.5 18.5 Z" fill="#f8f8f8" stroke="#d8d8d8" stroke-width="0.8"/><rect x="2.5" y="5.5" width="10" height="8.5" fill="#1a5fc0"/><path d="M2.5 14 L6.5 9.5 L12.5 14 Z" fill="#5aaaf0"/><circle cx="10" cy="7.5" r="1" fill="#bfe0fb"/></svg><div class="t" style="left:310.40px;top:472.99px;font-size:11px;line-height:11px;color:#1b1b1b;transform:scaleX(0.9617);">Screenshot 2022-02-23 102202</div><div class="t" style="left:518.00px;top:472.99px;font-size:11px;line-height:11px;color:#1b1b1b;transform:scaleX(0.9949);">2/23/2022 10:22 AM</div><div class="t" style="left:655.37px;top:472.99px;font-size:11px;line-height:11px;color:#7a7a7a;transform:scaleX(0.9264);">Local Disk (C:)\Users\Public\Public Pictures</div><div class="t" style="left:39.03px;top:618.19px;font-size:11px;line-height:11px;color:#444;transform:scaleX(0.9650);">11 items</div><div style="position:absolute;left:89px;top:618px;width:1px;height:10px;background:#e0e0e0"></div><div class="t" style="left:99.16px;top:618.19px;font-size:11px;line-height:11px;color:#444;transform:scaleX(0.9425);">1 item selected</div><div class="t" style="left:175.48px;top:618.19px;font-size:11px;line-height:11px;color:#444;transform:scaleX(0.9162);">11.6 KB</div><div style="position:absolute;left:220px;top:618px;width:1px;height:10px;background:#e0e0e0"></div><svg style="position:absolute;left:957.5px;top:616.5px;" width="11" height="11" viewBox="0 0 11 11"><path d="M0 1 H11 M0 4 H11 M0 7 H11 M0 10 H11" stroke="#4a4a4a" stroke-width="0.85"/></svg><svg style="position:absolute;left:977.5px;top:616.5px;" width="12" height="12" viewBox="0 0 12 12"><rect x="0.7" y="0.7" width="10.6" height="8.6" rx="1.2" fill="none" stroke="#4a4a4a" stroke-width="1"/><path d="M0.5 11 H11.5" stroke="#666" stroke-width="1"/></svg><div style="position:absolute;left:8px;top:138px;width:159px;height:49px;border:5px solid #fe0000;box-sizing:border-box"></div><div style="position:absolute;left:229px;top:135px;width:112px;height:42px;border:5px solid #fe0000;box-sizing:border-box"></div><div style="position:absolute;left:230px;top:295px;width:92px;height:32px;border:5px solid #fe0000;box-sizing:border-box"></div>
</body></html>
